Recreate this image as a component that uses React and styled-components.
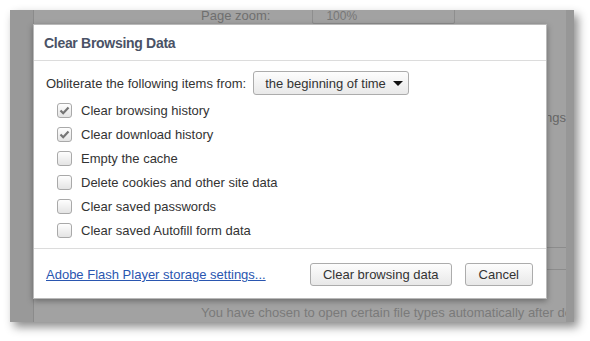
import React from "react";
import styled, { createGlobalStyle } from "styled-components";

const Global = createGlobalStyle`
  html, body { margin: 0; padding: 0; background: #fff; }
  body { font-family: "Liberation Sans", Arial, sans-serif; }
`;

const Stage = styled.div`
  width: 590px;
  height: 341px;
  padding: 10px 0 0 10px;
  box-sizing: border-box;
`;

const Window = styled.div`
  position: relative;
  width: 564px;
  height: 312px;
  background: #a2a2a2;
  box-shadow: 4px 5px 9px rgba(0, 0, 0, 0.45);
  display: flex;
  overflow: hidden;
`;

const Sidebar = styled.div`
  width: 23px;
  background: #999;
  border-right: 1px solid #8b8b8b;
  flex: none;
`;

const Page = styled.div`
  flex: 1;
  min-width: 0;
  display: flex;
  flex-direction: column;
  color: #6f6f6f;
  font-size: 13px;
  border-right: 8px solid #979797;
`;

const ZoomRow = styled.div`
  display: flex;
  align-items: center;
  height: 16px;
  margin-top: -3px;
  padding-left: 167px;
  gap: 42px;
`;

const GhostSelect = styled.div`
  width: 143px;
  height: 18px;
  border: 1px solid #8e8e8e;
  border-radius: 2px;
  box-sizing: border-box;
  padding: 2px 0 0 13px;
  font-size: 12px;
  color: #777;
`;

const GhostSide = styled.div`
  align-self: flex-end;
  margin-top: 87px;
  width: 18px;
  display: flex;
  justify-content: flex-end;
  overflow: hidden;
  font-size: 13px;
  color: #666;
`;

const Nowrap = styled.span`
  white-space: nowrap;
`;

const GhostButton = styled.div`
  align-self: flex-end;
  margin-top: 122px;
  width: 21px;
  height: 23px;
  border: 1px solid #8c8c8c;
  border-right: none;
  box-sizing: border-box;
`;

const GhostText = styled.div`
  margin-top: 35px;
  padding-left: 167px;
  white-space: nowrap;
  overflow: hidden;
  font-size: 13px;
  color: #7a7a7a;
`;

const Dialog = styled.div`
  position: absolute;
  left: 23px;
  top: 14px;
  width: 514px;
  height: 275px;
  background: #fff;
  border: 1px solid #b9b9b9;
  box-sizing: border-box;
  box-shadow: 0 2px 6px rgba(0, 0, 0, 0.35);
  display: flex;
  flex-direction: column;
`;

const Header = styled.div`
  height: 35px;
  flex: none;
  display: flex;
  align-items: center;
  padding-left: 10px;
  border-bottom: 1px solid #dcdcdc;
  font-size: 14px;
  letter-spacing: -0.3px;
  font-weight: bold;
  color: #4a5266;
`;

const Body = styled.div`
  flex: 1;
  padding: 10px 12px 0 12px;
  color: #333;
  font-size: 13px;
  display: flex;
  flex-direction: column;
`;

const FromRow = styled.div`
  display: flex;
  align-items: center;
  gap: 7px;
  height: 24px;
  margin-bottom: 3px;
`;

const Select = styled.div`
  width: 156px;
  height: 24px;
  box-sizing: border-box;
  border: 1px solid #acacac;
  border-radius: 3px;
  background: linear-gradient(#fdfdfd, #e9e9e9);
  display: flex;
  align-items: center;
  justify-content: space-between;
  padding: 0 5px 0 11px;
  color: #333;
`;

const Arrow = styled.span`
  width: 0;
  height: 0;
  border-left: 5px solid transparent;
  border-right: 5px solid transparent;
  border-top: 5px solid #111;
`;

const CheckRow = styled.label`
  display: flex;
  align-items: center;
  height: 24px;
  padding-left: 11px;
  gap: 9px;
`;

const Box = styled.span`
  width: 15px;
  height: 15px;
  box-sizing: border-box;
  border: 1px solid #a9a9a9;
  border-radius: 3px;
  background: linear-gradient(#fefefe, #e4e4e4);
  display: flex;
  align-items: center;
  justify-content: center;
`;

const Footer = styled.div`
  height: 49px;
  flex: none;
  border-top: 1px solid #dcdcdc;
  display: flex;
  align-items: center;
  padding: 0 13px 0 12px;
  font-size: 13px;
`;

const Link = styled.a`
  color: #2a56b0;
  text-decoration: underline;
  flex: 1;
  margin-top: 2px;
`;

const Button = styled.button`
  font-family: "Liberation Sans", Arial, sans-serif;
  font-size: 13px;
  color: #333;
  height: 23px;
  padding: 0 ${(p) => p.$pad}px;
  margin-left: ${(p) => p.$gap}px;
  margin-top: 2px;
  border: 1px solid #acacac;
  border-radius: 3px;
  background: linear-gradient(#fdfdfd, #e8e8e8);
`;

const Check = () => (
  <svg width="11" height="9" viewBox="0 0 11 9">
    <path d="M1.5 4.5 L4.2 7.2 L9.5 1.5" fill="none" stroke="#757575" strokeWidth="2.2" />
  </svg>
);

const items = [
  ["Clear browsing history", true],
  ["Clear download history", true],
  ["Empty the cache", false],
  ["Delete cookies and other site data", false],
  ["Clear saved passwords", false],
  ["Clear saved Autofill form data", false],
];

export default function App() {
  return (
    <>
      <Global />
      <Stage>
        <Window>
          <Sidebar />
          <Page>
            <ZoomRow>
              <span>Page zoom:</span>
              <GhostSelect>100%</GhostSelect>
            </ZoomRow>
            <GhostSide>
              <Nowrap>Settings</Nowrap>
            </GhostSide>
            <GhostButton />
            <GhostText>You have chosen to open certain file types automatically after downloading.</GhostText>
          </Page>
          <Dialog>
            <Header>Clear Browsing Data</Header>
            <Body>
              <FromRow>
                <span>Obliterate the following items from:</span>
                <Select>
                  <span>the beginning of time</span>
                  <Arrow />
                </Select>
              </FromRow>
              {items.map(([label, checked]) => (
                <CheckRow key={label}>
                  <Box>{checked && <Check />}</Box>
                  <span>{label}</span>
                </CheckRow>
              ))}
            </Body>
            <Footer>
              <Link href="#">Adobe Flash Player storage settings...</Link>
              <Button $pad={12} $gap={0}>Clear browsing data</Button>
              <Button $pad={13} $gap={13}>Cancel</Button>
            </Footer>
          </Dialog>
        </Window>
      </Stage>
    </>
  );
}
